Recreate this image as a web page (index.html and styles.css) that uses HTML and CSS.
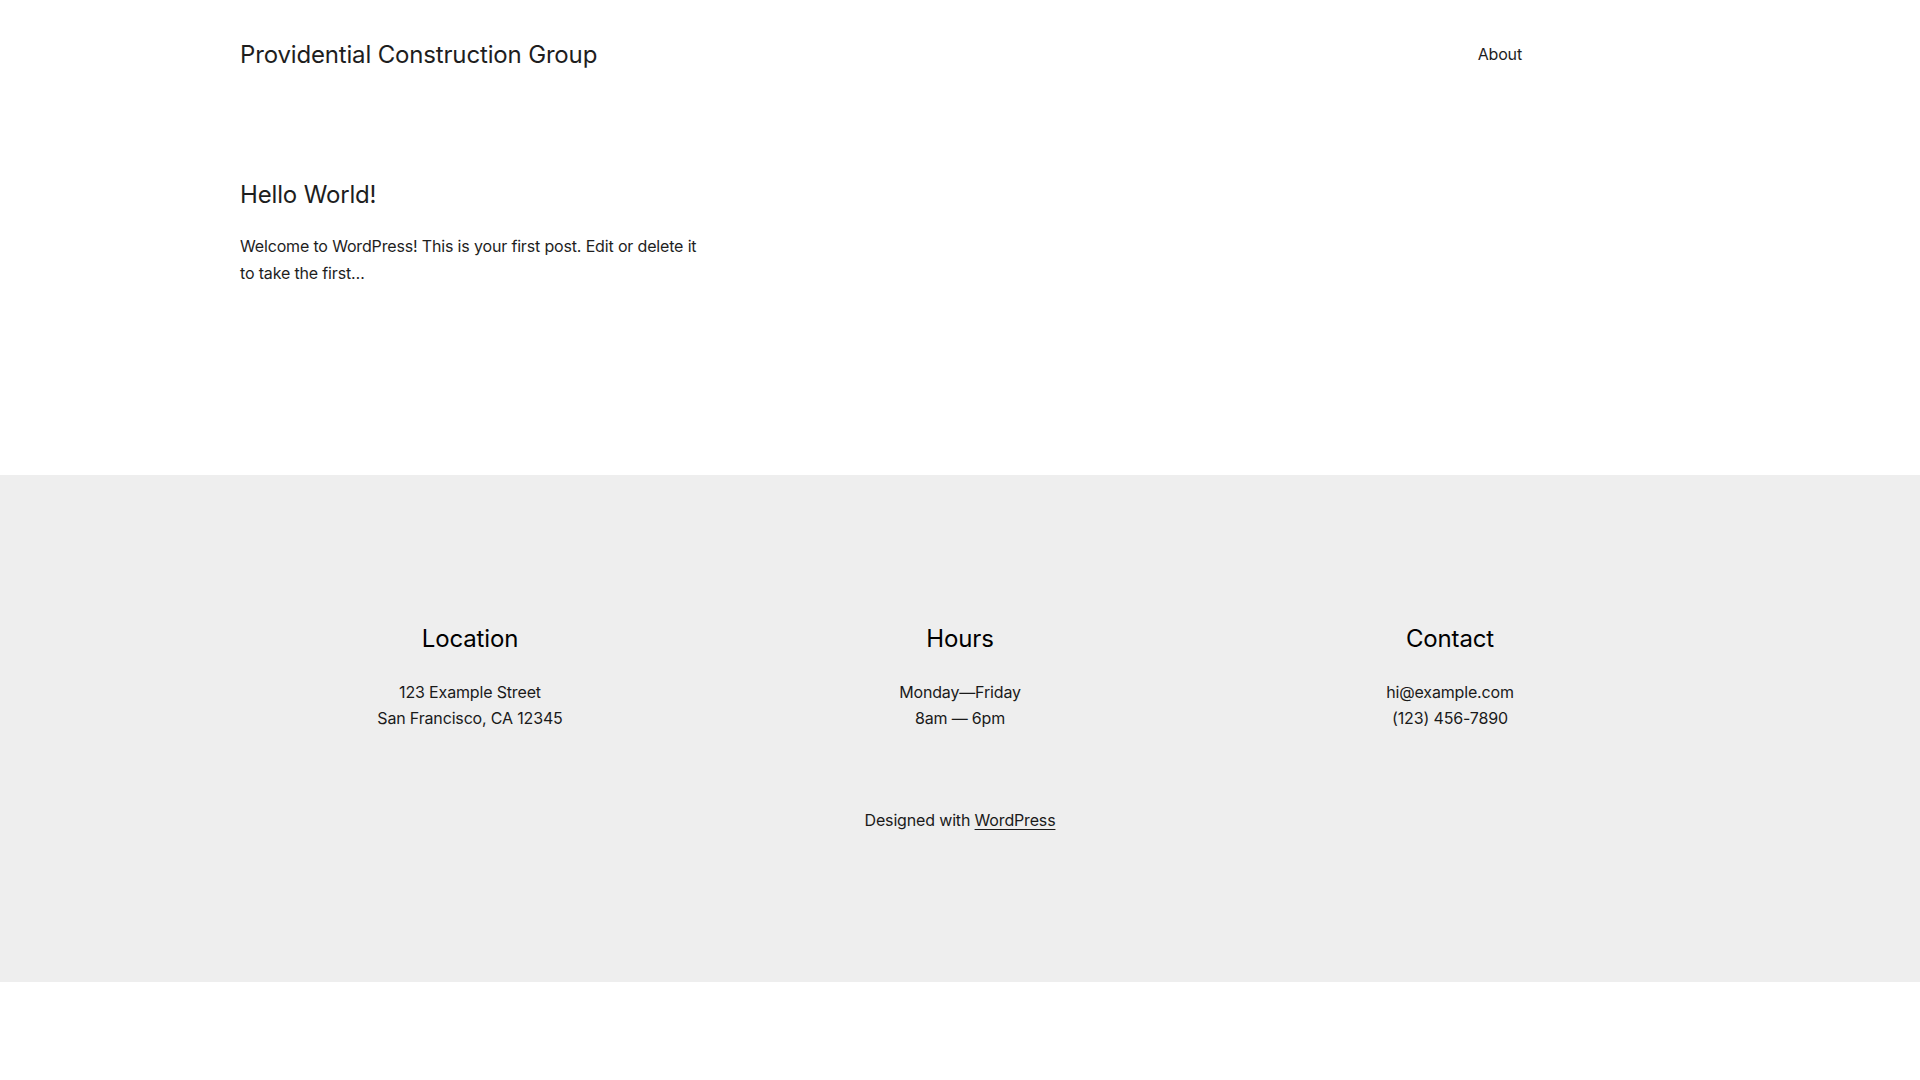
FILE: index.html
```html
<!DOCTYPE html>
<html lang="en">
<head>
<meta charset="utf-8">
<title>Providential Construction Group</title>
<link rel="stylesheet" href="styles.css">
</head>
<body>
<header class="site-header">
  <a class="site-title" href="#">Providential Construction Group</a>
  <nav class="site-nav"><a href="#">About</a></nav>
</header>
<main class="site-main">
  <article class="post">
    <h2 class="post-title">Hello World!</h2>
    <p class="post-excerpt">Welcome to WordPress! This is your first post. Edit or delete it to take the first…</p>
  </article>
</main>
<footer class="site-footer">
  <div class="footer-columns">
    <div class="footer-col">
      <h3 class="footer-heading">Location</h3>
      <p class="footer-text">123 Example Street<br>San Francisco, CA 12345</p>
    </div>
    <div class="footer-col">
      <h3 class="footer-heading">Hours</h3>
      <p class="footer-text">Monday—Friday<br>8am — 6pm</p>
    </div>
    <div class="footer-col">
      <h3 class="footer-heading">Contact</h3>
      <p class="footer-text">hi@example.com<br>(123) 456-7890</p>
    </div>
  </div>
  <p class="credit">Designed with <a href="#">WordPress</a></p>
</footer>
</body>
</html>
```
FILE: styles.css
```css
html, body {
  margin: 0;
  padding: 0;
  background: #ffffff;
}
body {
  font-family: Inter, "Noto Sans", "DejaVu Sans", sans-serif;
  color: #1e1e1e;
  font-size: 16px;
  line-height: 1.6;
  letter-spacing: -0.01em;
}
a {
  color: inherit;
  text-decoration: none;
}
.site-header {
  display: flex;
  justify-content: space-between;
  align-items: center;
  padding: 41px 398px 0 240px;
  height: 29px;
}
.site-title {
  font-size: 24px;
  line-height: 1.2;
}
.site-nav {
  font-size: 16px;
  line-height: 1.2;
  margin-top: -2px;
}
.site-main {
  padding: 111px 240px 0;
  height: 294px;
}
.post {
  width: 468px;
}
.post-title {
  margin: 0;
  font-size: 24px;
  font-weight: 400;
  line-height: 1.2;
}
.post-excerpt {
  margin: 23px 0 0;
  font-size: 16px;
  line-height: 27px;
}
.site-footer {
  background: #eeeeee;
  padding: 150px 240px 149px;
  color: #1a1a1a;
}
.footer-columns {
  display: grid;
  grid-template-columns: repeat(3, 1fr);
  gap: 30px;
  text-align: center;
}
.footer-heading {
  margin: 0;
  font-size: 24px;
  font-weight: 400;
  line-height: 1.2;
  color: #000;
}
.footer-text {
  margin: 25px 0 0;
  font-size: 16px;
  line-height: 26px;
}
.credit {
  margin: 76px 0 0;
  text-align: center;
  font-size: 16px;
  line-height: 26px;
}
.credit a {
  text-decoration: underline;
  text-underline-offset: 3px;
  text-decoration-thickness: 1px;
}
```
